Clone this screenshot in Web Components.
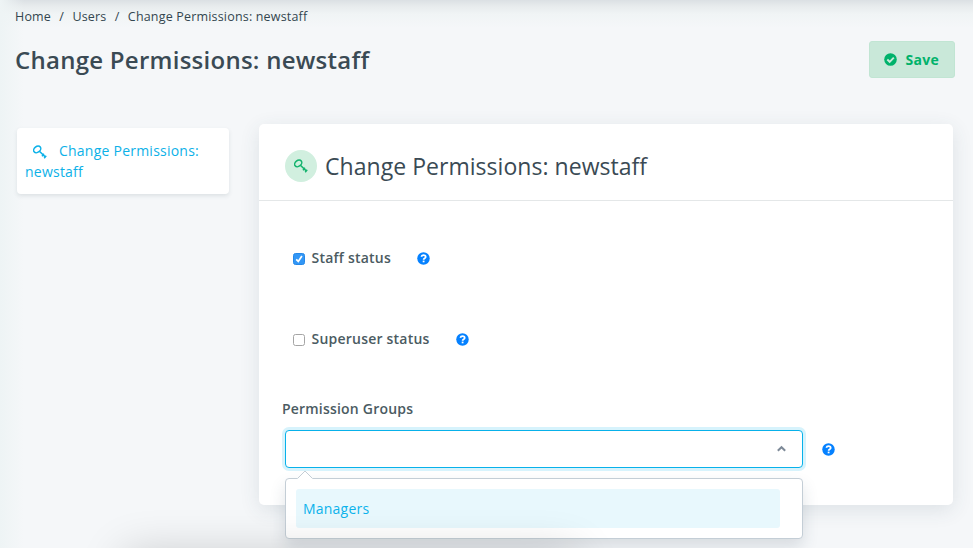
<!DOCTYPE html>
<html lang="en">
<head>
<meta charset="utf-8">
<title>Change Permissions: newstaff</title>
<style>
html,body{height:100%;margin:0}
body{overflow:hidden;background:#f5f7f9;font-family:"Open Sans","Noto Sans",sans-serif;color:#3a4a54}
</style>
</head>
<body>
<permissions-page></permissions-page>
<script>
const define = (name, html) => {
  const template = document.createElement('template');
  template.innerHTML = html;
  customElements.define(name, class extends HTMLElement {
    constructor() {
      super();
      this.attachShadow({mode: 'open'}).append(template.content.cloneNode(true));
    }
  });
};

define('key-icon', `
<style>:host{display:block;width:14px;height:14px}svg{display:block}</style>
<svg width="14" height="14" viewBox="0 0 14 14" fill="none" stroke="currentColor">
<ellipse cx="4.2" cy="4.4" rx="3.9" ry="2.9" transform="rotate(-38 4.2 4.4)" stroke-width="1.5"/>
<path d="M6.4 6.3L12.8 12.4M9 11.2L11 8.8M11.2 13.2L13.2 10.8" stroke-width="1.5"/></svg>`);

define('check-icon', `
<style>:host{display:block;width:13px;height:13px}svg{display:block}</style>
<svg width="13" height="13" viewBox="0 0 13 13"><circle cx="6.5" cy="6.5" r="6.3" fill="#00b26b"/><path d="M3.3 6.5L5.7 8.8L9.8 4.7" fill="none" stroke="#c9e8d9" stroke-width="1.9"/></svg>`);

define('help-icon', `
<style>:host{display:block;width:13px;height:13px}svg{display:block}</style>
<svg width="13" height="13" viewBox="0 0 13 13"><circle cx="6.5" cy="6.5" r="6.25" fill="#0581ff"/><path d="M4.3 4.8C4.7 3.6 5.4 3.2 6.5 3.2C7.8 3.2 8.7 3.9 8.7 4.9C8.7 6.3 6.6 6 6.6 7.7" fill="none" stroke="#fff" stroke-width="1.75"/><rect x="5.7" y="8.6" width="1.8" height="1.7" fill="#fff"/></svg>`);

define('bread-crumbs', `
<style>:host{display:flex;gap:8.3px;font-size:12.5px;line-height:18px;letter-spacing:.18px;color:#33464f}</style>
<span>Home</span><span>/</span><span>Users</span><span>/</span><span>Change Permissions: newstaff</span>`);

define('save-button', `
<style>:host{display:block}button{display:flex;align-items:center;gap:8.5px;box-sizing:border-box;width:86px;height:37px;padding:0 0 0 14px;border:1px solid #c1e5d3;border-radius:3px;background:#c9e8d9;color:#00b26b;font:700 14px/20px "Open Sans",sans-serif;letter-spacing:.25px}</style>
<button><check-icon></check-icon><slot></slot></button>`);

define('side-link', `
<style>:host{display:block;box-sizing:border-box;width:212px;height:66px;padding:12px 8px 0 8px;border-radius:4px;background:#fff;box-shadow:0 2px 4px rgba(50,70,80,.12);color:#0cb1e8;font-size:14px;line-height:21px;letter-spacing:.23px}
key-icon{display:inline-block;margin:0 12px 0 8px;vertical-align:-3px}</style>
<key-icon></key-icon><slot></slot>`);

define('panel-header', `
<style>:host{display:flex;align-items:center;gap:8px;box-sizing:border-box;height:77px;padding:7px 26px 0;border-bottom:1px solid #e4e7e8;font-size:23px;line-height:32px;letter-spacing:.04px;color:#3a4a54}
.badge{display:grid;place-items:center;width:32px;height:32px;border-radius:50%;background:#d1efdf;color:#12b36d}</style>
<span class="badge"><key-icon></key-icon></span><span><slot></slot></span>`);

define('check-field', `
<style>:host{display:flex;align-items:center;height:20px;font-size:14px;line-height:20px;font-weight:600;letter-spacing:.22px;color:#4b5b62}
.box{box-sizing:border-box;width:12px;height:12px;margin:2px 6.5px 0 0;border:1px solid #a5a5a5;border-radius:2.5px;background:#fff}
.box svg{display:none}:host([checked]) .box{border-color:#2588e8;background:#3297f6}:host([checked]) svg{display:block}
help-icon{margin:1px 0 0 26.2px}</style>
<span class="box"><svg width="10" height="10" viewBox="0 0 10 10"><path d="M2.2 5.3L4.3 7.4L7.9 2" fill="none" stroke="#fff" stroke-width="1.7"/></svg></span><span><slot></slot></span><help-icon></help-icon>`);

define('group-select', `
<style>:host{display:block}
.label{display:block;margin-left:-3px;font-size:14px;line-height:20px;font-weight:600;letter-spacing:.2px;color:#4b5b62}
.row{display:flex;align-items:center;gap:19px;margin-top:11px}
.wrap{position:relative;width:518px}
.control{display:flex;align-items:center;justify-content:flex-end;box-sizing:border-box;height:38px;padding-right:15px;border:1px solid #08b1ea;border-radius:4px;background:#fff;box-shadow:0 0 0 3px #d7f3fc}
.control svg{display:block}
help-icon{margin-top:1px}
.menu{position:absolute;top:48px;left:0;box-sizing:border-box;width:518px;height:61px;padding:10px;border:1px solid #c4ced6;border-radius:4px;background:#fff;box-shadow:0 8px 16px rgba(50,70,85,.15)}
.arrow{position:absolute;left:11px;top:-9px;display:block}
.option{box-sizing:border-box;width:484px;height:39px;padding-left:7px;border-radius:3px;background:#e8f8fd;color:#0cb3ec;font-size:14px;line-height:39px;letter-spacing:.22px}</style>
<span class="label">Permission Groups</span>
<div class="row"><div class="wrap"><div class="control"><svg width="11" height="8" viewBox="0 0 11 8"><path d="M1.8 5.8L5.5 2.2L9.2 5.8" fill="none" stroke="#7e8a98" stroke-width="2"/></svg></div>
<div class="menu"><svg class="arrow" width="16" height="10" viewBox="0 0 16 10"><path d="M.5 8.5L8 1L15.5 8.5V10H.5Z" fill="#fff"/><path d="M.5 8.5L8 1L15.5 8.5" fill="none" stroke="#c4ced6"/></svg><div class="option"><slot></slot></div></div></div><help-icon></help-icon></div>`);

define('form-panel', `
<style>:host{display:block;box-sizing:border-box;width:694px;height:381px;border-radius:5px;background:#fff;box-shadow:0 5px 20px rgba(50,75,90,.12)}
.body{display:flex;flex-direction:column;padding:47px 26px 0 26px}
check-field{margin-left:8px}check-field + check-field{margin-top:61px}group-select{margin-top:50px}</style>
<panel-header>Change Permissions: newstaff</panel-header>
<div class="body"><check-field checked>Staff status</check-field><check-field>Superuser status</check-field><group-select>Managers</group-select></div>`);

define('permissions-page', `
<style>:host{display:block;position:relative;box-sizing:border-box;width:973px;height:548px;padding:8px 18px 0 15px;overflow:hidden;background:linear-gradient(90deg,#eef4f5 0,rgba(245,247,249,0) 24px),linear-gradient(#dbe0e4 0,#e7ebed 6px,#f0f4f5 14px,#f5f7f9 28px)}
header{display:flex;align-items:flex-start;justify-content:space-between;height:67px;margin-top:15px}
h1{margin:3px 0 0;font-size:24px;line-height:32px;font-weight:600;letter-spacing:.26px;color:#3a4a54}
main{display:flex;align-items:flex-start;gap:30px;padding:16px 0 0 2px}side-link{margin-top:4px}
/* soft shadow of a window below the viewport edge */
.edge{position:absolute;left:130px;top:560px;width:440px;height:30px;box-shadow:0 0 46px 6px rgba(0,0,0,.2);pointer-events:none}</style>
<bread-crumbs></bread-crumbs>
<header><h1>Change Permissions: newstaff</h1><save-button>Save</save-button></header>
<main><side-link>Change Permissions: newstaff</side-link><form-panel></form-panel></main>
<div class="edge"></div>`);
</script>
</body>
</html>
